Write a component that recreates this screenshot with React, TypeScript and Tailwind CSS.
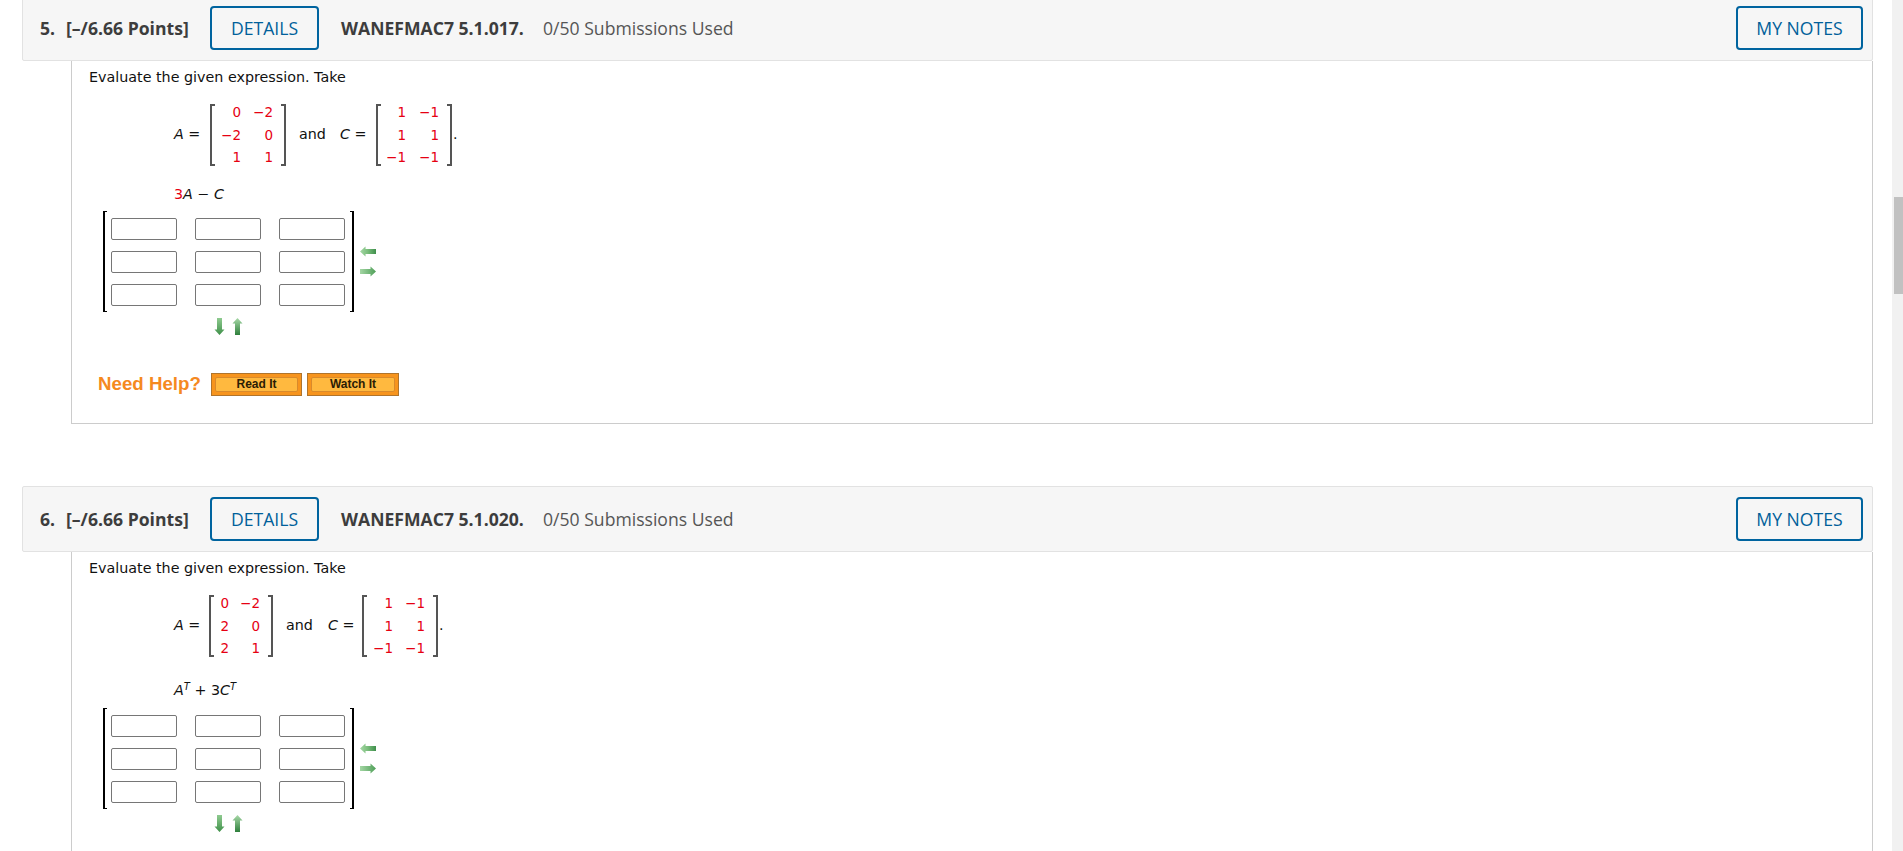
const ui = { fontFamily: '"Open Sans", "Noto Sans", sans-serif' };

const ArrowLeft = () => (
  <svg width="16" height="11" viewBox="0 0 16 11">
    <defs>
      <linearGradient id="lf" x1="0" y1="0" x2="1" y2="0">
        <stop offset="0" stopColor="#a6d8a6" />
        <stop offset="0.5" stopColor="#78bc7a" />
        <stop offset="1" stopColor="#3f8f4c" />
      </linearGradient>
      <linearGradient id="rt" x1="0" y1="0" x2="1" y2="0">
        <stop offset="0" stopColor="#a4d6a4" />
        <stop offset="1" stopColor="#4f9f58" />
      </linearGradient>
      <linearGradient id="dn" x1="0" y1="0" x2="0" y2="1">
        <stop offset="0" stopColor="#8fcb90" />
        <stop offset="1" stopColor="#3f9049" />
      </linearGradient>
      <linearGradient id="up" x1="0" y1="0" x2="0" y2="1">
        <stop offset="0" stopColor="#a8d9a8" />
        <stop offset="1" stopColor="#2e7f3c" />
      </linearGradient>
    </defs>
    <path d="M0 5.5L5.5 0.5v2.5H16v5H5.5v2.5z" fill="url(#lf)" />
  </svg>
);

const ArrowRight = () => (
  <svg width="16" height="11" viewBox="0 0 16 11">
    <path d="M16 5.5L10.5 0.5v2.5H0v5h10.5v2.5z" fill="url(#rt)" />
  </svg>
);

const ArrowDown = () => (
  <svg width="11" height="17" viewBox="0 0 11 17">
    <path d="M5.5 17L0.5 11.5H3V0h5v11.5h2.5z" fill="url(#dn)" />
  </svg>
);

const ArrowUp = () => (
  <svg width="11" height="17" viewBox="0 0 11 17">
    <path d="M5.5 0L0.5 5.5H3V17h5V5.5h2.5z" fill="url(#up)" />
  </svg>
);

const OutlineButton = ({ label, width }: { label: string; width: string }) => (
  <button
    className={`${width} h-[44px] shrink-0 rounded-[4px] border-2 border-[#00649f] bg-transparent text-[17.6px] text-[#00609a]`}
    style={ui}
  >
    {label}
  </button>
);

const QuestionHeader = ({ num, code }: { num: string; code: string }) => (
  <div
    className="flex h-[66px] items-center rounded-[2px] border border-[#e2e2e2] bg-[#f6f6f6] pl-[17px] pr-[9px] text-[17.6px] text-[#3d3d3d]"
    style={ui}
  >
    <span className="w-[26px] font-bold">{num}</span>
    <span className="w-[144px] font-bold">[–/6.66 Points]</span>
    <OutlineButton label="DETAILS" width="w-[109px]" />
    <span className="ml-[22px] w-[202px] font-bold">{code}</span>
    <span className="text-[#555]">0/50 Submissions Used</span>
    <div className="flex-1" />
    <OutlineButton label="MY NOTES" width="w-[127px]" />
  </div>
);

const BracketSide = ({ side }: { side: 'l' | 'r' }) => (
  <div
    className={`w-[5px] self-stretch border-y-2 border-[#555] ${side === 'l' ? 'border-l-2' : 'border-r-2'}`}
  />
);

const MathMatrix = ({ rows, gridCols }: { rows: string[][]; gridCols: string }) => (
  <div className="flex h-[62px]">
    <BracketSide side="l" />
    <div className={`grid ${gridCols} content-center pr-[8px] text-right text-[13.5px] leading-[22.5px] text-[#e60012]`}>
      {rows.flat().map((v, i) => (
        <span key={i}>{v}</span>
      ))}
    </div>
    <BracketSide side="r" />
  </div>
);

const AnswerMatrix = () => (
  <div className="flex items-center">
    <div className="relative flex h-[101px] w-[251px] flex-col justify-center">
      <div className="absolute inset-y-0 left-0 w-[4px] border-y border-l-2 border-black" />
      <div className="absolute inset-y-0 right-0 w-[4px] border-y border-r-2 border-black" />
      <div className="grid grid-cols-[66px_66px_66px] gap-x-[18px] gap-y-[11px] pl-[8px]">
        {Array.from({ length: 9 }).map((_, i) => (
          <input key={i} className="h-[22px] w-[66px] rounded-[2px] border border-[#767676] bg-white" />
        ))}
      </div>
    </div>
    <div className="ml-[6px] flex flex-col gap-[9px]">
      <ArrowLeft />
      <ArrowRight />
    </div>
  </div>
);

const UpDown = () => (
  <div className="mt-[6px] flex w-[251px] justify-center gap-[7px]">
    <ArrowDown />
    <ArrowUp />
  </div>
);

const HelpButton = ({ label, width }: { label: string; width: string }) => (
  <button
    className={`${width} flex h-[23px] items-center justify-center border border-[#b0742c] bg-[#f7941d] p-[3px]`}
  >
    <span className="flex h-full w-full items-center justify-center rounded-[2px] border border-[#d98a2b] bg-[#ffb93f] text-[12px] font-bold text-[#2b1d05]">
      {label}
    </span>
  </button>
);

const Var = ({ children }: { children: React.ReactNode }) => <i>{children}</i>;

export default function App() {
  return (
    <div
      className="flex h-[851px] w-full overflow-hidden bg-white text-[14.3px] text-[#111]"
      style={{ fontFamily: '"DejaVu Sans", Verdana, sans-serif' }}
    >
      <main className="ml-[22px] mt-[-5px] w-[1851px] shrink-0">
        {/* question 5 */}
        <QuestionHeader num="5." code="WANEFMAC7 5.1.017." />
        <div className="ml-[49px] border-x border-b border-[#cccccc] pb-[25px] pl-[17px] pt-[8px]">
          <p className="leading-[16px]">Evaluate the given expression. Take</p>
          <div className="ml-[85px] mt-[19px] flex items-center">
            <span className="w-[36px]">
              <Var>A</Var> =
            </span>
            <MathMatrix
              gridCols="grid-cols-[26px_32px]"
              rows={[
                ['0', '−2'],
                ['−2', '0'],
                ['1', '1'],
              ]}
            />
            <span className="ml-[13px] w-[41px]">and</span>
            <span className="w-[36px]">
              <Var>C</Var> =
            </span>
            <MathMatrix
              gridCols="grid-cols-[25px_33px]"
              rows={[
                ['1', '−1'],
                ['1', '1'],
                ['−1', '−1'],
              ]}
            />
            <span className="ml-[1px]">.</span>
          </div>
          <p className="ml-[85px] mt-[20px] leading-[16px]">
            <span className="text-[#e60012]">3</span>
            <Var>A</Var> − <Var>C</Var>
          </p>
          <div className="ml-[14px] mt-[9px]">
            <AnswerMatrix />
            <UpDown />
          </div>
          <div className="ml-[9px] mt-[35px] flex items-center" style={{ fontFamily: '"Liberation Sans", Arial, sans-serif' }}>
            <span className="w-[113px] text-[18.7px] font-bold text-[#f5891f]">Need Help?</span>
            <HelpButton label="Read It" width="w-[91px]" />
            <div className="w-[5px]" />
            <HelpButton label="Watch It" width="w-[92px]" />
          </div>
        </div>

        {/* question 6 */}
        <div className="mt-[62px]">
          <QuestionHeader num="6." code="WANEFMAC7 5.1.020." />
          <div className="ml-[49px] border-x border-[#cccccc] pb-[60px] pl-[17px] pt-[8px]">
            <p className="leading-[16px]">Evaluate the given expression. Take</p>
            <div className="ml-[85px] mt-[19px] flex items-center">
              <span className="w-[35px]">
                <Var>A</Var> =
              </span>
              <MathMatrix
                gridCols="grid-cols-[15px_31px]"
                rows={[
                  ['0', '−2'],
                  ['2', '0'],
                  ['2', '1'],
                ]}
              />
              <span className="ml-[13px] w-[42px]">and</span>
              <span className="w-[34px]">
                <Var>C</Var> =
              </span>
              <MathMatrix
                gridCols="grid-cols-[26px_32px]"
                rows={[
                  ['1', '−1'],
                  ['1', '1'],
                  ['−1', '−1'],
                ]}
              />
              <span className="ml-[1px]">.</span>
            </div>
            <p className="ml-[85px] mt-[25px] leading-[16px]">
              <Var>A</Var>
              <sup className="text-[10px]">
                <Var>T</Var>
              </sup>{' '}
              + <span>3</span>
              <Var>C</Var>
              <sup className="text-[10px]">
                <Var>T</Var>
              </sup>
            </p>
            <div className="ml-[14px] mt-[10px]">
              <AnswerMatrix />
              <UpDown />
            </div>
          </div>
        </div>
      </main>

      {/* page scrollbar */}
      <div className="ml-[19px] flex h-full w-[11px] flex-col items-end bg-[#f1f1f1] pt-[197px]">
        <div className="h-[97px] w-[9px] bg-[#c1c1c1]" />
      </div>
    </div>
  );
}
